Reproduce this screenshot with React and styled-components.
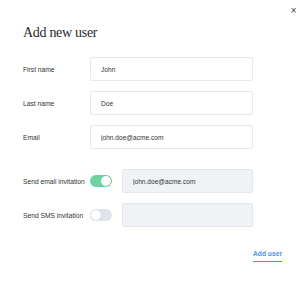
import React, { useState } from 'react';
import styled, { createGlobalStyle } from 'styled-components';

const GlobalStyle = createGlobalStyle`
  html, body {
    margin: 0;
    padding: 0;
    background: #fff;
  }
  body {
    font-family: 'Liberation Sans', Arial, sans-serif;
    color: #333;
  }
`;

const Dialog = styled.div`
  position: relative;
  width: 306px;
  height: 284px;
  box-sizing: border-box;
  padding: 26px 24px 0 23px;
  background: #fff;
`;

const Close = styled.button`
  position: absolute;
  top: 6px;
  right: 9px;
  border: 0;
  background: none;
  padding: 0;
  font-family: 'DejaVu Sans', sans-serif;
  font-size: 8px;
  line-height: 10px;
  color: #333;
  cursor: pointer;
`;

const Title = styled.h1`
  margin: 0;
  font-family: 'Liberation Serif', 'Times New Roman', serif;
  font-weight: 400;
  font-size: 14px;
  line-height: 14px;
  letter-spacing: -0.3px;
  color: #2a2a2a;
`;

const Fields = styled.div`
  display: flex;
  flex-direction: column;
  gap: 10px;
  margin-top: 17px;
`;

const Row = styled.div`
  display: grid;
  grid-template-columns: ${(p) => (p.$toggle ? '67px 22px 141px' : '67px 163px')};
  align-items: center;
  margin-top: ${(p) => (p.$spaced ? '10px' : '0')};
`;

const Label = styled.label`
  font-size: 6.7px;
  color: #333;
  white-space: nowrap;
`;

const Input = styled.input`
  box-sizing: border-box;
  height: 24px;
  width: ${(p) => (p.$shift ? '131px' : '100%')};
  margin: 0;
  margin-left: ${(p) => (p.$shift ? '10px' : '0')};
  padding: 0 10px;
  border: 1px solid ${(p) => (p.disabled ? '#e3e7eb' : '#e6e8ea')};
  border-radius: 2px;
  background: ${(p) => (p.disabled ? '#f0f3f6' : '#fff')};
  font-family: 'Liberation Sans', Arial, sans-serif;
  font-size: 6.6px;
  color: #333;
  outline: none;
  &:disabled {
    color: #333;
    -webkit-text-fill-color: #333;
    opacity: 1;
  }
`;

const Switch = styled.button`
  position: relative;
  width: 22px;
  height: 12px;
  padding: 0;
  border: 0;
  border-radius: 6px;
  background: ${(p) => (p.$on ? '#6dd3a2' : '#dfe4ec')};
  cursor: pointer;
  &::after {
    content: '';
    position: absolute;
    top: 1px;
    left: ${(p) => (p.$on ? '11px' : '1px')};
    width: 10px;
    height: 10px;
    border-radius: 50%;
    background: #fff;
    box-shadow: 0 0 1px rgba(0, 0, 0, 0.15);
  }
`;

const Footer = styled.div`
  display: flex;
  justify-content: flex-end;
  margin-top: 23px;
`;

const AddLink = styled.a`
  font-size: 6.7px;
  font-weight: 700;
  line-height: 8px;
  color: #4b8ff0;
  padding-bottom: 3px;
  border-bottom: 1px solid #4b8ff0;
  text-decoration: none;
  cursor: pointer;
`;

export default function App() {
  const [email, setEmail] = useState(true);
  const [sms, setSms] = useState(false);

  return (
    <>
      <GlobalStyle />
      <Dialog>
        <Close aria-label="Close">×</Close>
        <Title>Add new user</Title>
        <Fields>
          <Row>
            <Label>First name</Label>
            <Input defaultValue="John" />
          </Row>
          <Row>
            <Label>Last name</Label>
            <Input defaultValue="Doe" />
          </Row>
          <Row>
            <Label>Email</Label>
            <Input defaultValue="john.doe@acme.com" />
          </Row>
          <Row $toggle $spaced>
            <Label>Send email invitation</Label>
            <Switch $on={email} onClick={() => setEmail(!email)} />
            <Input $shift disabled value="john.doe@acme.com" readOnly />
          </Row>
          <Row $toggle>
            <Label>Send SMS invitation</Label>
            <Switch $on={sms} onClick={() => setSms(!sms)} />
            <Input $shift disabled value="" readOnly />
          </Row>
        </Fields>
        <Footer>
          <AddLink>Add user</AddLink>
        </Footer>
      </Dialog>
    </>
  );
}
